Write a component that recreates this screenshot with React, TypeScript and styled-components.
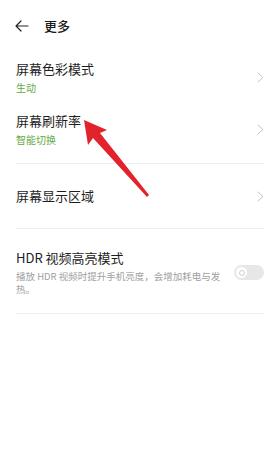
import styled, { createGlobalStyle } from 'styled-components'

const Global = createGlobalStyle`
	html, body {
		margin: 0;
		padding: 0;
		background: #fff;
	}
	body {
		font-family: "Noto Sans CJK SC", "Noto Sans", sans-serif;
		color: #222;
	}
`

const Page = styled.div`
	position: relative;
	width: 276px;
	height: 450px;
	background: #fff;
	overflow: hidden;
`

const Header = styled.header`
	display: flex;
	align-items: center;
	height: 52px;
	padding: 0 0 0 15px;
	box-sizing: border-box;
	gap: 15px;
`

const Title = styled.h1`
	margin: 0;
	font-size: 13px;
	font-weight: 500;
	line-height: 18px;
	color: #1a1a1a;
`

const List = styled.div`
	display: flex;
	flex-direction: column;
	margin: 0 12px 0 16px;
`

const Row = styled.div<{ $top: number; $bottom: number; $divider?: boolean }>`
	display: flex;
	align-items: center;
	gap: 12px;
	padding: ${p => p.$top}px 0 ${p => p.$bottom}px;
	border-bottom: ${p => (p.$divider ? '1px solid #eeeeee' : 'none')};
`

const Texts = styled.div`
	display: flex;
	flex-direction: column;
	gap: 3px;
	flex: 1;
`

const Label = styled.div`
	font-size: 13px;
	line-height: 18px;
	color: #1e1e1e;
`

const Sub = styled.div<{ $tone?: 'green' | 'grey' }>`
	font-size: ${p => (p.$tone === 'green' ? '10px' : '9.5px')};
	line-height: 13px;
	color: ${p => (p.$tone === 'green' ? '#63a943' : '#a0a0a0')};
	max-width: 208px;
`

const Toggle = styled.div`
	width: 30px;
	height: 15px;
	border-radius: 8px;
	background: #e7e7e7;
	display: flex;
	align-items: center;
	padding: 0 2px;
	box-sizing: border-box;
	flex-shrink: 0;
`

const Knob = styled.div`
	width: 11px;
	height: 11px;
	border-radius: 50%;
	background: #fff;
	display: flex;
	align-items: center;
	justify-content: center;
	&::after {
		content: "";
		width: 4px;
		height: 4px;
		border-radius: 50%;
		border: 1.3px solid #cfcfcf;
	}
`

const Pointer = styled.svg`
	position: absolute;
	left: 0;
	top: 0;
	pointer-events: none;
`

const Back = () => (
	<svg width="14" height="12" viewBox="0 0 14 12" fill="none" stroke="#222" strokeWidth="1.2" strokeLinecap="round" strokeLinejoin="round">
		<path d="M6 1 L1 6 L6 11 M1 6 H13" />
	</svg>
)

const Chevron = () => (
	<svg width="7" height="11" viewBox="0 0 7 11" fill="none" stroke="#c4c4c4" strokeWidth="1" strokeLinecap="round" strokeLinejoin="round">
		<path d="M1 1 L6 5.5 L1 10" />
	</svg>
)

export default function App() {
	return (
		<Page>
			<Global />
			<Header>
				<Back />
				<Title>更多</Title>
			</Header>
			<List>
				<Row $top={8} $bottom={10}>
					<Texts>
						<Label>屏幕色彩模式</Label>
						<Sub $tone="green">生动</Sub>
					</Texts>
					<Chevron />
				</Row>
				<Row $top={8} $bottom={17} $divider>
					<Texts>
						<Label>屏幕刷新率</Label>
						<Sub $tone="green">智能切换</Sub>
					</Texts>
					<Chevron />
				</Row>
				<Row $top={23} $bottom={23} $divider>
					<Texts>
						<Label>屏幕显示区域</Label>
					</Texts>
					<Chevron />
				</Row>
				<Row $top={20} $bottom={17} $divider>
					<Texts>
						<Label>HDR 视频高亮模式</Label>
						<Sub>播放 HDR 视频时提升手机亮度，会增加耗电与发热。</Sub>
					</Texts>
					<Toggle>
						<Knob />
					</Toggle>
				</Row>
			</List>
			<Pointer width="276" height="450" viewBox="0 0 276 450">
				<polygon points="84,120 107,130 100,133 149,195 147,197 93,138 88,145" fill="#e2232c" />
			</Pointer>
		</Page>
	)
}
